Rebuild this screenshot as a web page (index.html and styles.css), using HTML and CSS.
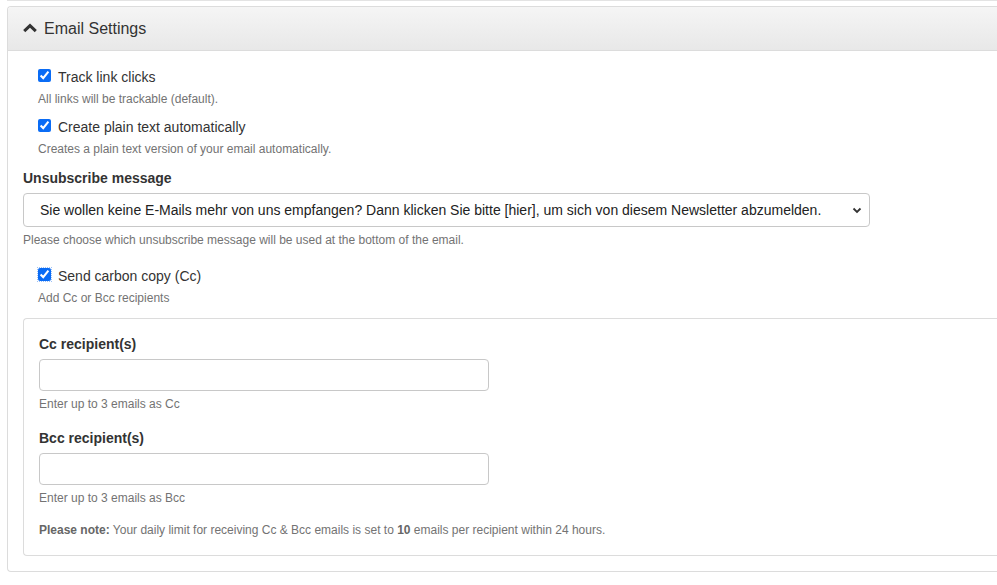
FILE: index.html
```html
<!DOCTYPE html>
<html lang="en">
<head>
<meta charset="utf-8">
<title>Email Settings</title>
<link rel="stylesheet" href="styles.css">
</head>
<body>
<div class="page">
  <div class="prev-panel"></div>
  <div class="panel">
    <div class="panel-heading">
      <svg class="chev" width="14" height="10" viewBox="0 0 14 10" aria-hidden="true">
        <path d="M1.2 8.2 L7 2.6 L12.8 8.2" fill="none" stroke="#333" stroke-width="3" stroke-linejoin="miter"/>
      </svg>
      <span class="panel-title">Email Settings</span>
    </div>
    <div class="panel-body">
      <label class="check"><input type="checkbox" checked><span>Track link clicks</span></label>
      <p class="help help-indent">All links will be trackable (default).</p>

      <label class="check check-next"><input type="checkbox" checked><span>Create plain text automatically</span></label>
      <p class="help help-indent">Creates a plain text version of your email automatically.</p>

      <div class="field-label unsub-label">Unsubscribe message</div>
      <div class="select-wrap">
        <select class="select">
          <option>Sie wollen keine E-Mails mehr von uns empfangen? Dann klicken Sie bitte [hier], um sich von diesem Newsletter abzumelden.</option>
        </select>
        <svg class="select-arrow" width="10" height="7" viewBox="0 0 10 7" aria-hidden="true">
          <path d="M1.5 1.5 L5 5 L8.5 1.5" fill="none" stroke="#333" stroke-width="1.8"/>
        </svg>
      </div>
      <p class="help help-select">Please choose which unsubscribe message will be used at the bottom of the email.</p>

      <label class="check check-cc"><input type="checkbox" checked class="focused"><span>Send carbon copy (Cc)</span></label>
      <p class="help help-indent">Add Cc or Bcc recipients</p>

      <div class="well">
        <div class="field-label">Cc recipient(s)</div>
        <input type="text" class="text-input">
        <p class="help help-select">Enter up to 3 emails as Cc</p>

        <div class="field-label field-next">Bcc recipient(s)</div>
        <input type="text" class="text-input">
        <p class="help help-select">Enter up to 3 emails as Bcc</p>

        <p class="help note"><strong>Please note:</strong> Your daily limit for receiving Cc &amp; Bcc emails is set to <strong class="num">10</strong> emails per recipient within 24 hours.</p>
      </div>
    </div>
  </div>
</div>
</body>
</html>
```

FILE: styles.css
```css
html, body {
  margin: 0;
  padding: 0;
  background: #fff;
}

body {
  font-family: "Liberation Sans", Arial, Helvetica, sans-serif;
  font-size: 14px;
  line-height: 20px;
  color: #333;
  overflow: hidden;
}

.page {
  padding-left: 7px;
}

.prev-panel {
  height: 0;
  border-bottom: 1px solid #e3e3e3;
}

.panel {
  margin-top: 5px;
  border: 1px solid #dcdcdc;
  border-right: none;
  border-radius: 4px 0 0 4px;
  background: #fff;
}

.panel-heading {
  height: 43px;
  display: flex;
  align-items: center;
  padding-left: 15px;
  background: linear-gradient(to bottom, #f5f5f5 0%, #e8e8e8 100%);
  border-bottom: 1px solid #dcdcdc;
  border-radius: 3px 0 0 0;
}

.chev {
  display: block;
  margin-right: 7px;
  margin-top: -1px;
}

.panel-title {
  font-size: 16px;
  line-height: 18px;
  color: #333;
}

.panel-body {
  padding: 16px 0 15px 15px;
}

.check {
  display: flex;
  align-items: center;
  height: 20px;
  padding-left: 15px;
  cursor: pointer;
}

.check input {
  width: 13px;
  height: 13px;
  margin: 0 7px 0 0;
  accent-color: #0a6cf5;
  position: relative;
  top: -2px;
}

.check input.focused {
  outline: 1px dotted #9cc0f5;
  outline-offset: 0;
}

.check-next {
  margin-top: 9px;
}

.check-cc {
  margin-top: 17px;
}

.help {
  margin: 4px 0 0;
  font-size: 12px;
  line-height: 17px;
  color: #737373;
}

.help-indent {
  padding-left: 15px;
}

.help-select {
  margin-top: 5px;
}

.field-label {
  font-weight: bold;
  line-height: 20px;
}

.unsub-label {
  margin-top: 10px;
}

.select-wrap {
  position: relative;
  width: 847px;
  margin-top: 5px;
}

.select {
  display: block;
  width: 847px;
  height: 34px;
  margin: 0;
  padding: 0 30px 0 16px;
  border: 1px solid #c8c8c8;
  border-radius: 4px;
  background: #fff;
  font-family: "Liberation Sans", Arial, Helvetica, sans-serif;
  font-size: 14px;
  color: #222;
  appearance: none;
  -webkit-appearance: none;
}

.select-arrow {
  position: absolute;
  right: 8px;
  top: 14px;
  pointer-events: none;
}

.well {
  margin-top: 11px;
  border: 1px solid #dcdcdc;
  border-right: none;
  border-radius: 4px 0 0 4px;
  padding: 15px 0 16px 15px;
}

.text-input {
  display: block;
  box-sizing: border-box;
  width: 450px;
  height: 32px;
  margin: 5px 0 0;
  padding: 6px 12px;
  border: 1px solid #c8c8c8;
  border-radius: 4px;
  background: #fff;
  font-family: "Liberation Sans", Arial, Helvetica, sans-serif;
  font-size: 14px;
}

.field-next {
  margin-top: 15px;
}

.note {
  margin-top: 15px;
}

.note strong {
  color: #666;
}
```
